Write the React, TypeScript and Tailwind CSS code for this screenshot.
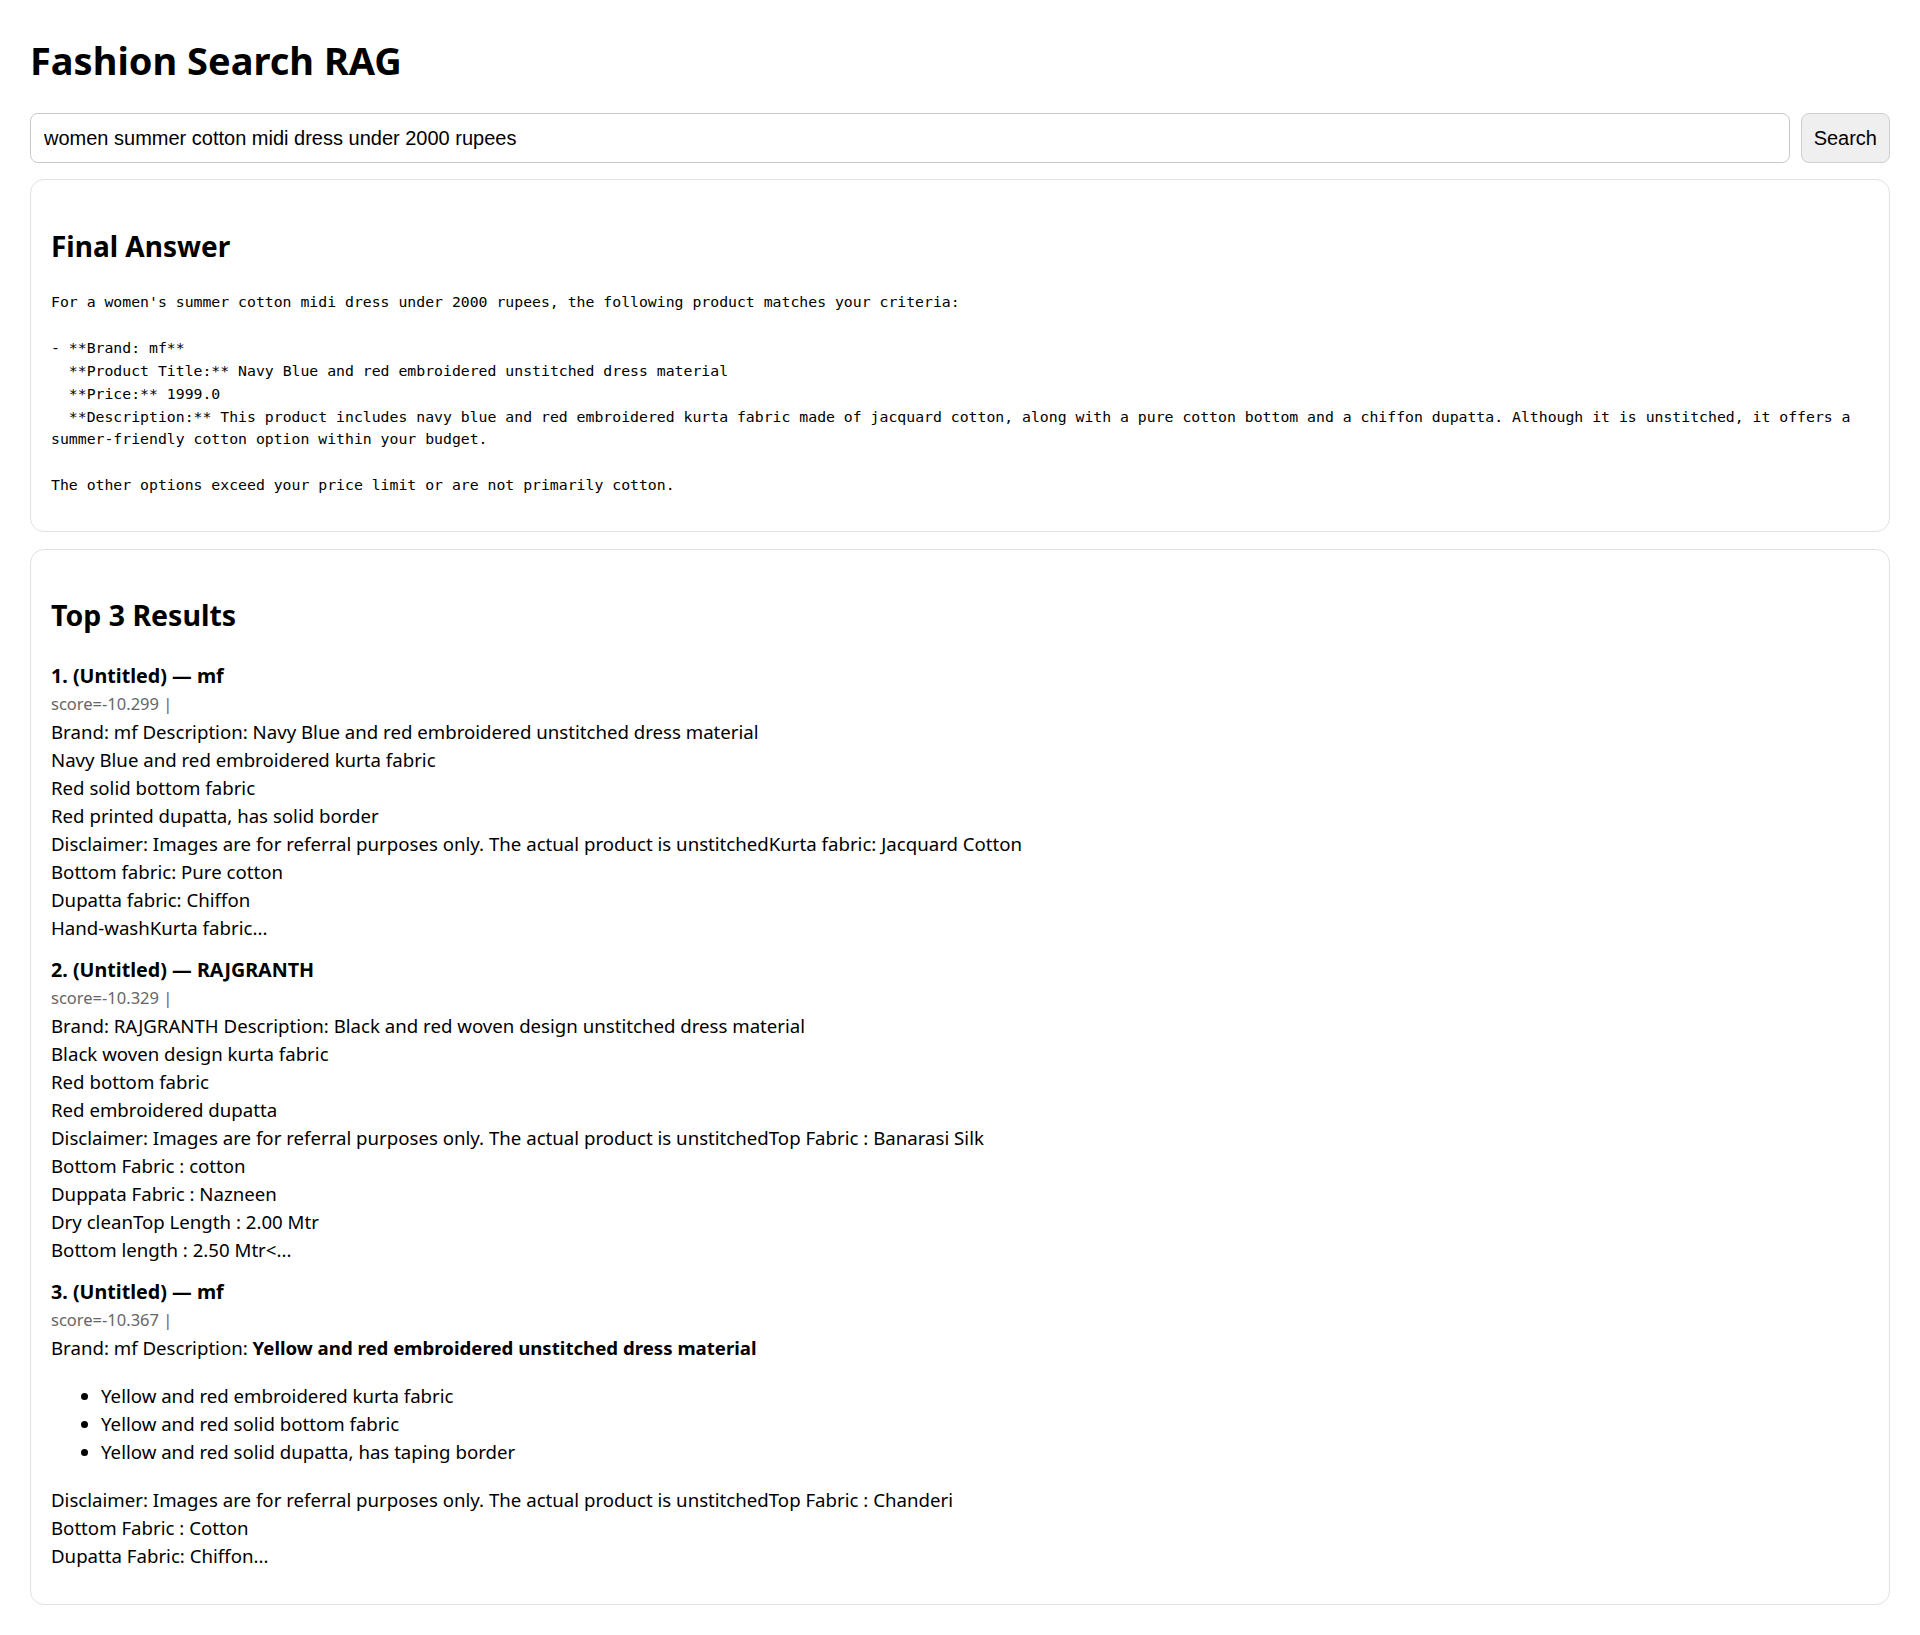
import React from 'react';

const sans = "font-['Segoe_UI','Noto_Sans',sans-serif]";

const answer = `For a women's summer cotton midi dress under 2000 rupees, the following product matches your criteria:

- **Brand: mf**
  **Product Title:** Navy Blue and red embroidered unstitched dress material
  **Price:** 1999.0
  **Description:** This product includes navy blue and red embroidered kurta fabric made of jacquard cotton, along with a pure cotton bottom and a chiffon dupatta. Although it is unstitched, it offers a
summer-friendly cotton option within your budget.

The other options exceed your price limit or are not primarily cotton.`;

const results = [
    {
        title: '1. (Untitled) — mf',
        score: 'score=-10.299 |',
        lines: [
            'Brand: mf Description: Navy Blue and red embroidered unstitched dress material',
            'Navy Blue and red embroidered kurta fabric',
            'Red solid bottom fabric',
            'Red printed dupatta, has solid border',
            'Disclaimer: Images are for referral purposes only. The actual product is unstitchedKurta fabric: Jacquard Cotton',
            'Bottom fabric: Pure cotton',
            'Dupatta fabric: Chiffon',
            'Hand-washKurta fabric...',
        ],
    },
    {
        title: '2. (Untitled) — RAJGRANTH',
        score: 'score=-10.329 |',
        lines: [
            'Brand: RAJGRANTH Description: Black and red woven design unstitched dress material',
            'Black woven design kurta fabric',
            'Red bottom fabric',
            'Red embroidered dupatta',
            'Disclaimer: Images are for referral purposes only. The actual product is unstitchedTop Fabric : Banarasi Silk',
            'Bottom Fabric : cotton',
            'Duppata Fabric : Nazneen',
            'Dry cleanTop Length : 2.00 Mtr',
            'Bottom length : 2.50 Mtr<...',
        ],
    },
];

function ResultHead({ title, score }: { title: string; score: string }) {
    return (
        <>
            <div className="font-bold text-[19.7px] leading-[28px]">{title}</div>
            <div className="text-[16.5px] leading-[28px] text-[#666]">{score}</div>
        </>
    );
}

export default function App() {
    return (
        <div className={`min-h-screen bg-white text-black px-[30px] pt-[36px] pb-[31px] ${sans}`}>
            <h1 className="text-[38px] font-bold leading-[48px]">Fashion Search RAG</h1>

            <div className="mt-[29px] flex gap-[11px]">
                <input
                    type="text"
                    defaultValue="women summer cotton midi dress under 2000 rupees"
                    className="flex-1 h-[50px] border border-[#c8c8c8] rounded-[8px] px-[13px] text-[20px] text-black font-['Liberation_Sans',Arial,sans-serif] outline-none"
                />
                <button className="h-[50px] px-[12px] border border-[#cfcfcf] bg-[#efefef] rounded-[8px] text-[20px] font-['Liberation_Sans',Arial,sans-serif]">
                    Search
                </button>
            </div>

            <section className="mt-[16px] border border-[#e2e2e2] rounded-[14px] px-5 pt-[46px] pb-[34px]">
                <h2 className="text-[28px] font-bold leading-[40px]">Final Answer</h2>
                <pre className="mt-[25px] whitespace-pre-wrap font-['DejaVu_Sans_Mono',monospace] text-[14.8px] leading-[22.9px]">
                    {answer}
                </pre>
            </section>

            <section className="mt-[17px] border border-[#e2e2e2] rounded-[14px] px-5 pt-[45px] pb-[20px] text-[18.65px]">
                <h2 className="text-[28.5px] font-bold leading-[40px] mb-[27px]">Top 3 Results</h2>

                {results.map(r => (
                    <div key={r.title} className="mb-[14px]">
                        <ResultHead title={r.title} score={r.score} />
                        {r.lines.map((l, i) => (
                            <div key={i} className="leading-[28px]">{l}</div>
                        ))}
                    </div>
                ))}

                <div className="mb-[14px]">
                    <ResultHead title="3. (Untitled) — mf" score="score=-10.367 |" />
                    <div className="leading-[28px]">
                        Brand: mf Description: <b>Yellow and red embroidered unstitched dress material</b>
                    </div>
                    <ul className="list-disc pl-[50px] my-5">
                        <li className="leading-[28px]">Yellow and red embroidered kurta fabric</li>
                        <li className="leading-[28px]">Yellow and red solid bottom fabric</li>
                        <li className="leading-[28px]">Yellow and red solid dupatta, has taping border</li>
                    </ul>
                    <div className="leading-[28px]">Disclaimer: Images are for referral purposes only. The actual product is unstitchedTop Fabric : Chanderi</div>
                    <div className="leading-[28px]">Bottom Fabric : Cotton</div>
                    <div className="leading-[28px]">Dupatta Fabric: Chiffon...</div>
                </div>
            </section>
        </div>
    );
}
